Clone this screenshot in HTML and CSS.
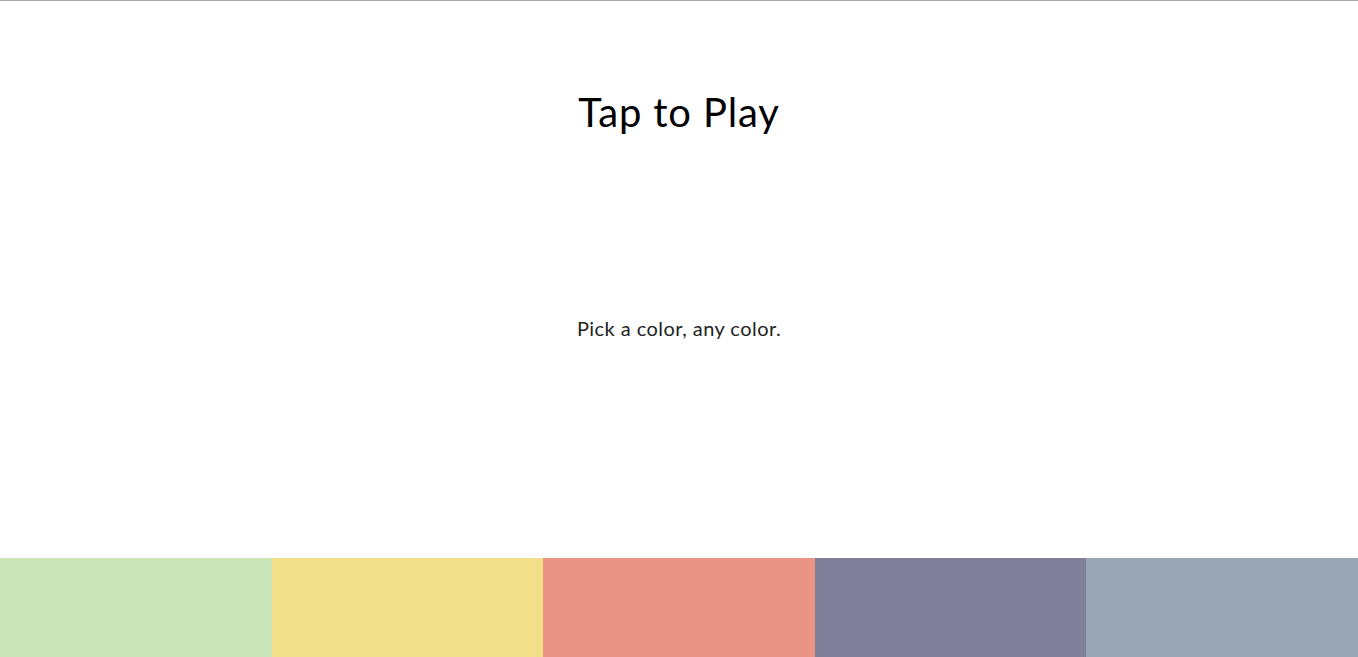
FILE: index.html
```html
<!DOCTYPE html>
<html lang="en">
<head>
<meta charset="utf-8">
<title>Tap to Play</title>
<link rel="stylesheet" href="styles.css">
</head>
<body>
<div class="page">
  <header class="top">
    <h1 class="title">Tap to Play</h1>
  </header>
  <main class="middle">
    <p class="hint">Pick a color, any color.</p>
  </main>
  <footer class="swatches">
    <div class="swatch green"></div>
    <div class="swatch yellow"></div>
    <div class="swatch salmon"></div>
    <div class="swatch purple"></div>
    <div class="swatch slate"></div>
  </footer>
</div>
</body>
</html>
```
FILE: styles.css
```css
html, body {
  margin: 0;
  padding: 0;
  height: 100%;
  background: #fff;
}
body {
  font-family: Lato, "Open Sans", sans-serif;
  color: #111;
}
.page {
  height: 100vh;
  box-sizing: border-box;
  border-top: 1px solid #aaaaaa;
  display: flex;
  flex-direction: column;
}
.top {
  display: flex;
  justify-content: center;
  padding-top: 87px;
}
.title {
  margin: 0;
  font-size: 40px;
  line-height: 48px;
  font-weight: 400;
  letter-spacing: 0.85px;
  color: #000;
}
.middle {
  flex: 1;
  display: flex;
  justify-content: center;
  padding-top: 180px;
}
.hint {
  margin: 0;
  font-size: 20px;
  line-height: 24px;
  font-weight: 400;
  letter-spacing: 0.45px;
  color: #222;
}
.swatches {
  display: flex;
  height: 99px;
}
.swatch {
  flex: 1;
}
.green { background: #cbe7ba; }
.yellow { background: #f2df8a; }
.salmon { background: #ea9485; }
.purple { background: #7f7f9a; }
.slate { background: #97a6b2; }
```
